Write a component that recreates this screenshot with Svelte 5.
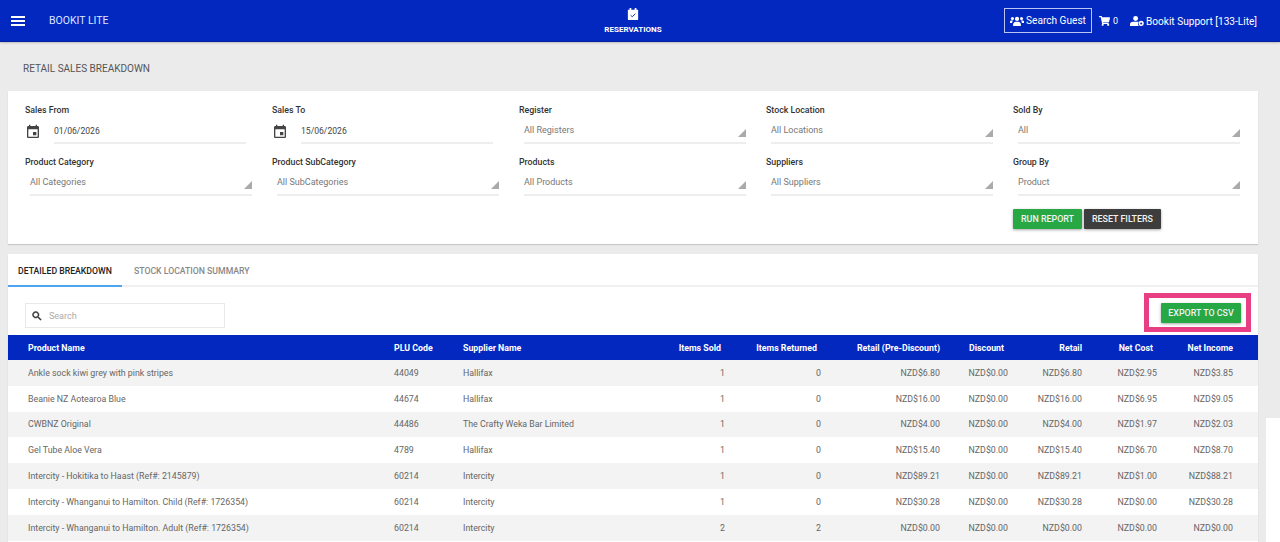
<script lang="ts">
  const firstRow = [
    { label: 'Sales From', value: '01/06/2026', date: true },
    { label: 'Sales To', value: '15/06/2026', date: true },
    { label: 'Register', value: 'All Registers' },
    { label: 'Stock Location', value: 'All Locations' },
    { label: 'Sold By', value: 'All' }
  ];
  const secondRow = [
    { label: 'Product Category', value: 'All Categories' },
    { label: 'Product SubCategory', value: 'All SubCategories' },
    { label: 'Products', value: 'All Products' },
    { label: 'Suppliers', value: 'All Suppliers' },
    { label: 'Group By', value: 'Product' }
  ];
  const filters = [...firstRow, ...secondRow];

  const columns = ['Items Sold', 'Items Returned', 'Retail (Pre-Discount)', 'Discount', 'Retail', 'Net Cost', 'Net Income'];

  const rows = [
    ['Ankle sock kiwi grey with pink stripes', '44049', 'Hallifax', '1', '0', 'NZD$6.80', 'NZD$0.00', 'NZD$6.80', 'NZD$2.95', 'NZD$3.85'],
    ['Beanie NZ Aotearoa Blue', '44674', 'Hallifax', '1', '0', 'NZD$16.00', 'NZD$0.00', 'NZD$16.00', 'NZD$6.95', 'NZD$9.05'],
    ['CWBNZ Original', '44486', 'The Crafty Weka Bar Limited', '1', '0', 'NZD$4.00', 'NZD$0.00', 'NZD$4.00', 'NZD$1.97', 'NZD$2.03'],
    ['Gel Tube Aloe Vera', '4789', 'Hallifax', '1', '0', 'NZD$15.40', 'NZD$0.00', 'NZD$15.40', 'NZD$6.70', 'NZD$8.70'],
    ['Intercity - Hokitika to Haast (Ref#: 2145879)', '60214', 'Intercity', '1', '0', 'NZD$89.21', 'NZD$0.00', 'NZD$89.21', 'NZD$1.00', 'NZD$88.21'],
    ['Intercity - Whanganui to Hamilton. Child (Ref#: 1726354)', '60214', 'Intercity', '1', '0', 'NZD$30.28', 'NZD$0.00', 'NZD$30.28', 'NZD$0.00', 'NZD$30.28'],
    ['Intercity - Whanganui to Hamilton. Adult (Ref#: 1726354)', '60214', 'Intercity', '2', '2', 'NZD$0.00', 'NZD$0.00', 'NZD$0.00', 'NZD$0.00', 'NZD$0.00']
  ];
</script>

<div class="page">
  <header class="topbar">
    <div class="brand">
      <svg class="menu" viewBox="0 0 14 10" width="14" height="10" fill="#fff"><rect width="14" height="2" y="0"/><rect width="14" height="2" y="4"/><rect width="14" height="2" y="8"/></svg>
      <span class="brand-name">BOOKIT LITE</span>
    </div>
    <div class="nav-item">
      <svg viewBox="0 0 14 14" width="12" height="12" fill="#fff"><path d="M3 0h2v2h4V0h2v2h2v11a1 1 0 0 1-1 1H2a1 1 0 0 1-1-1V2h2z"/><path d="M4.2 8.4l1.9 1.8 3.6-3.5" fill="none" stroke="#0328c0" stroke-width="1.1"/></svg>
      <span>RESERVATIONS</span>
    </div>
    <div class="actions">
      <button class="guest">
        <svg viewBox="0 0 20 14" width="14" height="10" fill="#fff"><circle cx="10" cy="4" r="3"/><path d="M4.5 14v-2.2C4.5 9.2 6.6 8 8 8h4c1.4 0 3.5 1.200 3.500 3.800V14z"/><circle cx="3.500" cy="3.500" r="2.200"/><circle cx="16.500" cy="3.500" r="2.200"/><path d="M0 10V8c0-1 1-1.800 2-1.800h2.600C3.600 7.200 3 8.300 3 10zM20 10V8c0-1-1-1.800-2-1.800h-2.600c1 1 1.600 2.100 1.600 3.800z"/></svg>
        Search Guest
      </button>
      <span class="cart">
        <svg viewBox="0 0 576 512" width="11" height="10" fill="#fff"><path d="M528.12 301.319l47.273-208C578.806 78.301 567.391 64 551.99 64H159.208l-9.166-44.81C147.758 8.021 137.93 0 126.529 0H24C10.745 0 0 10.745 0 24v16c0 13.255 10.745 24 24 24h69.883l70.248 343.435C147.325 417.1 136 435.222 136 456c0 30.928 25.072 56 56 56s56-25.072 56-56c0-15.674-6.447-29.835-16.824-40h209.647C430.447 426.165 424 440.326 424 456c0 30.928 25.072 56 56 56s56-25.072 56-56c0-22.172-12.888-41.332-31.579-50.405l5.517-24.276c3.413-15.018-8.002-29.319-23.403-29.319H218.117l-6.545-32h293.145c11.206 0 20.92-7.754 23.403-18.681z"/></svg>
        0
      </span>
      <span class="user">
        <svg viewBox="0 0 20 14" width="14" height="10" fill="#fff"><circle cx="8" cy="3.500" r="3.500"/><path d="M0 14v-2.500C0 9.500 1.800 8 3.800 8h7.400c.4 0 .8.100 1.100.200A5 5 0 0 0 12.500 14z"/><circle cx="16" cy="10.500" r="2.600" fill="none" stroke="#fff" stroke-width="2.200"/></svg>
        Bookit Support [133-Lite]
      </span>
    </div>
  </header>

  <main class="content">
    <h1 class="title">RETAIL SALES BREAKDOWN</h1>

    <section class="card filters">
      <div class="filter-grid">
        {#each filters as f}
          <div class="field">
            <span class="label">{f.label}</span>
            {#if f.date}
              <div class="date-row">
                <svg viewBox="0 0 24 24" width="16" height="16" fill="#444"><path d="M17 12h-5v5h5v-5zM16 1v2H8V1H6v2H5c-1.110 0-1.990.9-1.990 2L3 19c0 1.100.89 2 2 2h14c1.100 0 2-.9 2-2V5c0-1.100-.9-2-2-2h-1V1h-2zm3 18H5V8h14v11z"/></svg>
                <span class="date-value">{f.value}</span>
              </div>
            {:else}
              <div class="select">
                <span>{f.value}</span>
                <i class="corner"></i>
              </div>
            {/if}
          </div>
        {/each}
      </div>
      <div class="filter-actions">
        <button class="btn green">RUN REPORT</button>
        <button class="btn dark">RESET FILTERS</button>
      </div>
    </section>

    <section class="card results">
      <nav class="tabs">
        <span class="tab active">DETAILED BREAKDOWN</span>
        <span class="tab">STOCK LOCATION SUMMARY</span>
      </nav>
      <div class="toolbar">
        <label class="search">
          <svg viewBox="0 0 24 24" width="12" height="12" fill="#333"><path d="M15.500 14h-.79l-.28-.27C15.410 12.590 16 11.110 16 9.500 16 5.910 13.090 3 9.500 3S3 5.910 3 9.500 5.910 16 9.500 16c1.610 0 3.090-.59 4.230-1.570l.27.28v.79l5 4.990L20.490 19l-4.990-5zm-6 0C7.010 14 5 11.990 5 9.500S7.010 5 9.500 5 14 7.010 14 9.500 11.990 14 9.500 14z" stroke="#333" stroke-width="1"/></svg>
          <span>Search</span>
        </label>
        <button class="btn green export">EXPORT TO CSV</button>
      </div>
      <table>
        <colgroup>
          <col style="width:366px" /><col style="width:69px" /><col style="width:207px" /><col style="width:95px" />
          <col style="width:92px" /><col style="width:123px" /><col style="width:68px" /><col style="width:74px" />
          <col style="width:75px" /><col style="width:81px" />
        </colgroup>
        <thead>
          <tr>
            <th>Product Name</th>
            <th>PLU Code</th>
            <th>Supplier Name</th>
            {#each columns as c, i}
              <th class="num" class:inset={i === 0 || i === 3 || i === 5}>{c}</th>
            {/each}
          </tr>
        </thead>
        <tbody>
          {#each rows as row}
            <tr>
              {#each row as cell, i}
                <td class:num={i > 2} class:returned={i === 4}>{cell}</td>
              {/each}
            </tr>
          {/each}
        </tbody>
      </table>
    </section>
  </main>

  <div class="highlight"></div>
  <div class="blank"></div>
</div>

<style>
  :global(body) { background: #ebebeb; }

  .page {
    position: relative;
    height: 542px;
    overflow: hidden;
    background: #ebebeb;
    font-family: Roboto, "Liberation Sans", sans-serif;
    color: #666;
  }

  .topbar {
    height: 42px;
    box-sizing: border-box;
    display: grid;
    grid-template-columns: 1fr auto 1fr;
    align-items: center;
    padding: 0 23px 0 11px;
    background: #0328c0;
    border-bottom: 1px solid #02209c;
    box-shadow: 0 1px 2px rgba(0,0,0,0.2);
    color: #fff;
  }
  .brand { display: flex; align-items: center; }
  .brand-name { margin-left: 24px; font-size: 10.5px; color: #dfe5ff; }
  .menu { display: block; }

  .nav-item {
    display: flex;
    flex-direction: column;
    align-items: center;
    gap: 5px;
    font-size: 8px;
    font-weight: 700;
    margin: 1px 2px 0 0;
  }

  .actions {
    display: flex;
    align-items: center;
    justify-content: flex-end;
    font-size: 10.1px;
  }
  .guest {
    display: flex;
    align-items: center;
    gap: 2px;
    height: 25px;
    padding: 0 5px;
    background: transparent;
    border: 1px solid #b9c5f2;
    color: #fff;
    font: inherit;
  }
  .cart { display: flex; align-items: center; gap: 3px; margin-left: 7px; font-size: 9px; padding-top: 1px; }
  .user { display: flex; align-items: center; gap: 2px; margin-left: 12px; padding-top: 1px; }

  .content { padding: 0 22px 0 8px; }

  .title {
    margin: 0;
    padding: 20px 0 0 15px;
    height: 49px;
    box-sizing: border-box;
    font-size: 10px;
    font-weight: 400;
    color: #555;
    line-height: 13px;
  }

  .card { background: #fff; box-shadow: 0 1px 1px rgba(0,0,0,0.15); }

  .filters { height: 153px; box-sizing: border-box; padding: 13px 0 0 17px; margin-bottom: 10px; }
  .filter-grid { display: grid; grid-template-columns: repeat(5, 247px); row-gap: 12px; }
  .field { height: 40px; display: flex; flex-direction: column; }
  .label { font-size: 8.8px; color: #333; line-height: 12px; font-weight: 500; }

  .date-row { display: flex; align-items: center; margin-top: 3px; }
  .date-row svg { flex: none; }
  .date-value {
    flex: none;
    width: 192px;
    margin-left: 13px;
    padding: 6px 0 5px;
    font-size: 8.6px;
    line-height: 12px;
    color: #444;
    border-bottom: 2px solid #eee;
  }

  .select {
    position: relative;
    width: 222px;
    height: 25px;
    box-sizing: border-box;
    margin-left: 5px;
    margin-top: 3px;
    padding-top: 5px;
    font-size: 9px;
    line-height: 12px;
    color: #777;
    border-bottom: 2px solid #eee;
  }
  .corner {
    position: absolute;
    right: 0;
    top: 10px;
    width: 0;
    height: 0;
    border-style: solid;
    border-width: 0 0 8px 8px;
    border-color: transparent transparent #aaa transparent;
  }

  .filter-actions { display: flex; gap: 2px; padding-left: 988px; margin-top: 13px; }

  .btn {
    height: 20px;
    padding: 0;
    border: none;
    border-radius: 1px;
    font-family: inherit;
    font-size: 8.9px;
    font-weight: 500;
    color: #f2f2f2;
    box-shadow: 0 1px 3px rgba(0,0,0,0.35);
  }
  .green { width: 69px; background: #28a745; }
  .dark { width: 77px; background: #3d3d3d; }

  .results { height: 300px; }
  .tabs { display: flex; height: 33px; box-sizing: border-box; border-bottom: 2px solid #f0f0f0; font-size: 8.7px; }
  .tab {
    height: 33px;
    box-sizing: border-box;
    padding: 11px 12px 0;
    line-height: 12px;
    font-weight: 500;
    color: #888;
    white-space: nowrap;
  }
  .tab.active { padding: 11px 10px 0; width: 114px; color: #222; border-bottom: 2px solid #4fa5ef; }

  .toolbar { display: flex; justify-content: space-between; align-items: flex-start; padding: 16px 17px 0; height: 48px; box-sizing: border-box; }
  .search {
    display: flex;
    align-items: center;
    gap: 6px;
    width: 200px;
    height: 25px;
    box-sizing: border-box;
    padding-left: 5px;
    border: 1px solid #e8e8e8;
    font-size: 9px;
    color: #aaa;
  }
  .export { width: 80px; height: 20px; }

  table { width: 1250px; border-collapse: collapse; table-layout: fixed; font-size: 8.8px; }
  th {
    height: 25px;
    padding: 0 20px;
    background: #0328c0;
    color: #fff;
    font-weight: 700;
    text-align: left;
    white-space: nowrap;
    overflow: visible;
  }
  td {
    height: 25.800px;
    padding: 0 20px;
    color: #666;
    white-space: nowrap;
    overflow: visible;
  }
  tbody tr:nth-child(odd) { background: #f3f3f3; }
  tbody tr:nth-child(even) { background: #fff; }
  th.num, td.num { text-align: right; padding: 0 20px 0 0; }
  th.inset { padding-right: 24px; }
  td.returned { padding-right: 16px; }
  tr > :last-child.num { padding-right: 25px; }

  .highlight {
    position: absolute;
    left: 1144px;
    top: 293px;
    width: 107px;
    height: 39px;
    box-sizing: border-box;
    border: 5px solid #e83f84;
    pointer-events: none;
  }
  .blank { position: absolute; left: 1266px; top: 418px; width: 14px; height: 124px; background: #fff; }
</style>
